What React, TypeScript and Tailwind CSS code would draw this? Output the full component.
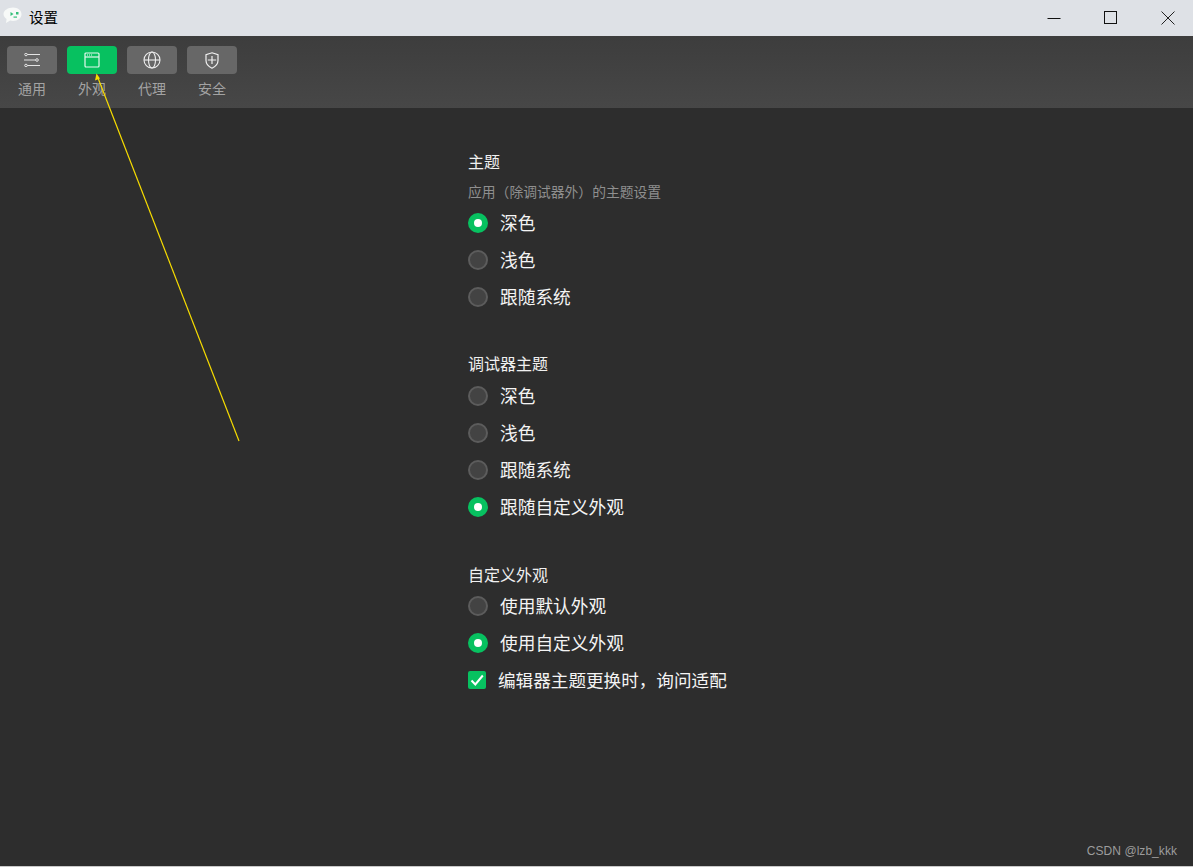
import React from "react";

const font = { fontFamily: '"Noto Sans CJK SC", "Noto Sans", sans-serif' };

function Radio({ label, on }: { label: string; on?: boolean }) {
  return (
    <div className="flex items-center h-[37px]">
      {on ? (
        <span className="w-5 h-5 rounded-full bg-[#07c160] flex items-center justify-center">
          <span className="w-2 h-2 rounded-full bg-white" />
        </span>
      ) : (
        <span className="w-5 h-5 rounded-full bg-[#434343] border-2 border-[#5c5c5c]" />
      )}
      <span className="ml-[12px] mt-[-2px] text-[17.7px] leading-[26px] text-[#f4f4f4]">{label}</span>
    </div>
  );
}

function Tool({ label, on, children }: { label: string; on?: boolean; children: React.ReactNode }) {
  return (
    <div className="w-[50px] flex flex-col items-center">
      <div className={`w-[50px] h-[28px] rounded-[4px] flex items-center justify-center ${on ? "bg-[#07c160]" : "bg-[#676767]"}`}>
        {children}
      </div>
      <div className="mt-[4px] text-[14px] leading-[20px] text-[#a3a3a3] whitespace-nowrap">{label}</div>
    </div>
  );
}

export default function App() {
  return (
    <div className="relative w-[1193px] h-[867px] overflow-hidden flex flex-col bg-[#2d2d2d]" style={font}>
      <div className="h-9 shrink-0 bg-[#dee1e6] flex items-center">
        <svg width="19" height="18" viewBox="0 0 19 18" className="ml-[3px] mt-[-5px]">
          <path d="M10 .5c4.800 0 8.500 2.800 8.500 6.700s-3.700 6.700-8.500 6.700c-1 0-1.900-.1-2.800-.4L3 16l.6-4.100C1.800 10.700.5 9.100.5 7.200.5 3.300 5.200.5 10 .5z" fill="#f7f9f8" />
          <path d="M7.500 5l3 2-3 2z" fill="#35c07a" />
          <rect x="13" y="5" width="2.500" height="2.500" fill="#35c07a" />
          <rect x="10.500" y="9.500" width="3.500" height="1.200" fill="#35c07a" />
        </svg>
        <span className="ml-[7px] mt-[-3px] text-[14.5px] leading-[20px] text-black">设置</span>
        <div className="ml-auto flex items-center">
          <svg width="14" height="14" viewBox="0 0 14 14" className="mr-[42px]"><path d="M0.500 7.500h13" stroke="#111" strokeWidth="1" /></svg>
          <svg width="14" height="14" viewBox="0 0 14 14" className="mr-[44px]"><rect x="1.500" y="0.500" width="12" height="12" fill="none" stroke="#111" strokeWidth="1" /></svg>
          <svg width="14" height="14" viewBox="0 0 14 14" className="mr-[18px]"><path d="M0.500 0.500l13 13M13.500 0.500l-13 13" stroke="#222" strokeWidth="1" /></svg>
        </div>
      </div>

      <div className="h-[72px] shrink-0 bg-gradient-to-b from-[#3d3d3d] to-[#474747] flex gap-[10px] pl-[7px] pt-[10px]">
        <Tool label="通用">
          <svg width="16" height="14" viewBox="0 0 16 14" fill="none" stroke="#e4e4e4" strokeWidth="1">
            <path d="M3 1.500h13M0 7h12M3 12.500h13" />
            <circle cx="2" cy="1.500" r="1.300" fill="#676767" />
            <circle cx="13" cy="7" r="1.300" fill="#676767" />
            <circle cx="2" cy="12.500" r="1.300" fill="#676767" />
          </svg>
        </Tool>
        <Tool label="外观" on>
          <svg width="16" height="16" viewBox="0 0 16 16" fill="none" stroke="#e6f9ef" strokeWidth="1.200">
            <rect x="1" y="1" width="14" height="14" rx="1" />
            <path d="M1 5h14" />
            <path d="M3 3h1M5 3h1M7 3h1" strokeWidth="1" />
          </svg>
        </Tool>
        <Tool label="代理">
          <svg width="18" height="18" viewBox="0 0 18 18" fill="none" stroke="#eeeeee" strokeWidth="1.100">
            <circle cx="9" cy="9" r="8" />
            <ellipse cx="9" cy="9" rx="3.500" ry="8" />
            <path d="M1 9h16" />
          </svg>
        </Tool>
        <Tool label="安全">
          <svg width="14" height="17" viewBox="0 0 14 17" fill="none" stroke="#f0f0f0" strokeWidth="1.200">
            <path d="M7 .8l6 1.900v5.800c0 3.500-2.300 5.900-6 7.700-3.700-1.800-6-4.200-6-7.700V2.700z" />
            <path d="M7 4v8M2.800 8h8.400" />
          </svg>
        </Tool>
      </div>

      <div className="flex-1 pl-[468px] pt-[41px] flex flex-col">
        <div className="text-[16px] leading-[24px] text-[#f0f0f0]">主题</div>
        <div className="mt-[8px] text-[13.8px] leading-[20px] text-[#8f8f8f]">应用（除调试器外）的主题设置</div>
        <div className="mt-[3px]">
          <Radio label="深色" on />
          <Radio label="浅色" />
          <Radio label="跟随系统" />
        </div>

        <div className="mt-[36px] text-[16px] leading-[24px] text-[#f0f0f0]">调试器主题</div>
        <div className="mt-[2px]">
          <Radio label="深色" />
          <Radio label="浅色" />
          <Radio label="跟随系统" />
          <Radio label="跟随自定义外观" on />
        </div>

        <div className="mt-[37px] text-[16px] leading-[24px] text-[#f0f0f0]">自定义外观</div>
        <div className="mt-[1px]">
          <Radio label="使用默认外观" />
          <Radio label="使用自定义外观" on />
          <div className="flex items-center h-[37px]">
            <span className="w-[18px] h-[18px] rounded-[2px] bg-[#07c160] flex items-center justify-center">
              <svg width="14" height="14" viewBox="0 0 14 14" fill="none" stroke="#fff" strokeWidth="2">
                <path d="M1.500 7.500l3.800 4L12.800 2.500" />
              </svg>
            </span>
            <span className="ml-[12px] text-[17.6px] leading-[26px] text-[#f4f4f4]">编辑器主题更换时，询问适配</span>
          </div>
        </div>
      </div>

      <div className="h-px shrink-0 bg-[#c9c9c9]" />

      <div className="absolute right-[16px] bottom-[8px] text-[12px] leading-[16px] text-[#9c9c9c]" style={{ fontFamily: '"Liberation Sans", sans-serif', letterSpacing: "0.05px" }}>
        CSDN @lzb_kkk
      </div>

      <svg className="absolute left-0 top-0 pointer-events-none" width="260" height="460" viewBox="0 0 260 460">
        <path d="M239 441L98 78" stroke="#f7dc00" strokeWidth="1.200" fill="none" />
        <path d="M96.500 73.500l-1.500 7 5-2z" fill="#f7dc00" />
      </svg>
    </div>
  );
}
